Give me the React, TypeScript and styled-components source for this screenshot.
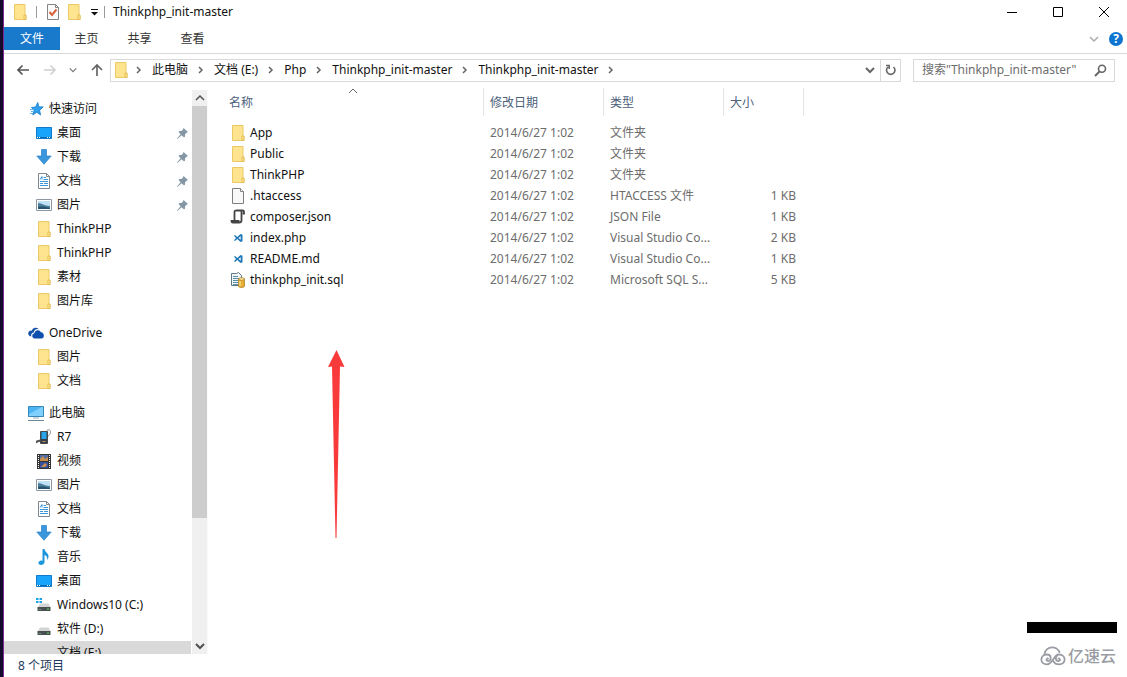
import React from "react";
import styled, { createGlobalStyle } from "styled-components";

const GlobalStyle = createGlobalStyle`
  * { box-sizing: border-box; }
  body {
    margin: 0;
    background: #fff;
    color: #111;
    font: 12px/20px "Noto Sans", "Noto Sans CJK SC", sans-serif;
  }
  button, input { font: inherit; color: inherit; border: 0; background: none; padding: 0; margin: 0; }
  a { color: inherit; text-decoration: none; }
  svg { display: block; flex: none; }
  ul, ol { list-style: none; margin: 0; padding: 0; }
`;

/* ---------- Icons ---------- */

const Folder = () => (
  <svg width="16" height="16" viewBox="0 0 16 16">
    <path d="M2.500 .5h10.500v10.300l1 .7v4H2.500z" fill="#ffe48f" stroke="#ecc964" />
    <path d="M12 11h2v4.500h-2z" fill="#ffeaa6" stroke="#e6bd4c" />
  </svg>
);
const CheckPage = () => (
  <svg width="16" height="16" viewBox="0 0 16 16">
    <path d="M2.500 .5h8l3 3v12h-11z" fill="#fafafa" stroke="#858585" />
    <path d="M10.500 .5v3h3" fill="none" stroke="#858585" />
    <path d="M4.500 8l2.500 3 4.500-5.500" fill="none" stroke="#d9603b" strokeWidth="2" />
  </svg>
);
const Star = () => (
  <svg width="16" height="16" viewBox="0 0 16 16">
    <path d="M9.800 1.500l1 4.300 4.400.1-3.600 3.300 1 4.700-3.800-2.600-4 2.600 1.200-4.700L3.500 6.500l4-.5z" fill="#2ea0ee" stroke="#1478c8" strokeWidth=".8" />
    <path d="M2 8.500h4M3 10.500h3M2 12.500h3" stroke="#64b7ef" />
  </svg>
);
const Desktop = () => (
  <svg width="16" height="16" viewBox="0 0 16 16">
    <path d="M.5 2.500h15v11H.5z" fill="#18a4fb" stroke="#1079cb" />
    <path d="M1 12.500h14" stroke="#0f68b5" />
    <path d="M1 12.500h1M3 12.500h1M11 12.500h1M13 12.500h1" stroke="#fff" />
  </svg>
);
const Download = () => (
  <svg width="16" height="16" viewBox="0 0 16 16">
    <path d="M5.500 .5h5V7h4.700L8 15.300.8 7h4.700z" fill="#3a96dd" stroke="#2b83c9" strokeWidth=".7" />
  </svg>
);
const Doc = () => (
  <svg width="16" height="16" viewBox="0 0 16 16">
    <path d="M2.500 .5h8l3 3v12h-11z" fill="#fff" stroke="#7f8890" />
    <path d="M10.500 .5v3h3" fill="none" stroke="#7f8890" />
    <path d="M4 6.500l2-3v3m1.500-2H10M7.500 6.500H12M4 8.500h8M4 10.500h3m1 0h4M4 12.500h8" fill="none" stroke="#3997da" />
  </svg>
);
const Picture = () => (
  <svg width="16" height="16" viewBox="0 0 16 16">
    <path d="M.5 2.500h15v11H.5z" fill="#fff" stroke="#8b98a3" />
    <path d="M2 4h12v8H2z" fill="#bfe1f6" />
    <path d="M2 6c4 0 6 3 12 3v3H2z" fill="#4c7d9b" />
    <path d="M2 10c4-1 8 0 12 1v1H2z" fill="#275370" />
  </svg>
);
const OneDrive = () => (
  <svg width="16" height="16" viewBox="0 0 16 16">
    <path d="M3.300 11.500A3 3 0 0 1 1 6.500a2.800 2.800 0 0 1 2.700-.8A4.200 4.200 0 0 1 11 4.200 4 4 0 0 0 5.700 7.500c-2 .2-3 2-2.400 4z" fill="#1452a8" />
    <path d="M6.500 13.500a2.700 2.700 0 0 1-.2-5.300 3.600 3.600 0 0 1 6.700-1 3.300 3.300 0 0 1 2.800 3.200c.2 1.700-.8 3.100-2.300 3.100z" fill="#0f4fae" />
  </svg>
);
const Monitor = () => (
  <svg width="16" height="16" viewBox="0 0 16 16">
    <path d="M.5 1.500h15v10H.5z" fill="#4db5f3" stroke="#3a85b7" />
    <path d="M1 9l13-7h1v9H1z" fill="#7fd0fb" />
    <path d="M5 13h6" stroke="#9badb9" />
    <path d="M0 15.500h16" stroke="#718795" />
  </svg>
);
const Player = () => (
  <svg width="16" height="16" viewBox="0 0 16 16">
    <path d="M10 3c1-3 5-3 4.500.5-.2 2-1.500 2-2.500 4" fill="none" stroke="#8a8a8a" />
    <path d="M0 14c1-3 3-1 5-3" fill="none" stroke="#555" strokeWidth="2" />
    <path d="M4.500 2.500h7v12h-7z" fill="#333f49" stroke="#4a4a4a" />
    <path d="M5.500 3h5v7h-5z" fill="#2ba5ee" />
    <path d="M6.500 12.500h3" stroke="#c59150" />
  </svg>
);
const Film = () => (
  <svg width="16" height="16" viewBox="0 0 16 16">
    <path d="M1 1h14v15H1z" fill="#343434" />
    <path d="M2.500 2v13M13.500 2v13" stroke="#fff" strokeDasharray="1 1" />
    <path d="M4 2h8v6H4z" fill="#526fa4" />
    <path d="M4 9h8v6H4z" fill="#394f9b" />
    <path d="M4 6l3-3 2 3 3-2v4H4zM5 14l4-4 2 2-2 2z" fill="#c99050" />
  </svg>
);
const Music = () => (
  <svg width="16" height="16" viewBox="0 0 16 16">
    <path d="M6.500 0h2c0 3 4.500 4 4 8-.2 1.500-1 2.300-1.500 3 .5-3-.5-4.500-2.500-5v7c0 3-5 4-6 1.500-.6-2 2-3.700 4-2.700z" fill="#1d96dc" />
  </svg>
);
const Drive = ({ windows }: { windows?: boolean }) => (
  <svg width="16" height="16" viewBox="0 0 16 16">
    {windows && <path d="M0 1h2.500v2H0zM3.500 1H6v2H3.500zM0 4h2.500v2H0zM3.500 4H6v2H3.500z" fill="#18a5e8" />}
    <path d="M4 6.500h8.500l2 3.500H2z" fill="#d3d5d5" />
    <path d="M1.500 10h13v4h-13z" fill="#46504f" />
    <path d="M2.500 12.500h3" stroke="#71817f" />
    <path d="M11 12h2" stroke="#63d45e" />
  </svg>
);
const Pin = () => (
  <svg width="11" height="11" viewBox="0 0 11 11">
    <path d="M6.500 0L11 4 9.500 4.700 8 6.500v2L7 9.500 4.700 7.300.3 11 0 10.500 3.600 6.200 1.500 4l1-1h2L6 1.500z" fill="#8597a5" />
  </svg>
);
const BlankPage = () => (
  <svg width="16" height="16" viewBox="0 0 16 16">
    <path d="M2.500 .5h8l3 3v12h-11z" fill="#f8f8f8" stroke="#7f7f7f" />
    <path d="M10.500 .5v3h3" fill="#fff" stroke="#7f7f7f" />
  </svg>
);
const Script = () => (
  <svg width="16" height="16" viewBox="0 0 16 16">
    <path d="M4.500 11V3c0-1.500.5-1.500 2-1.500h6c1.500 0 1.500 0 1.500 3h-1.500" fill="none" stroke="#444" strokeWidth="1.800" />
    <path d="M11.500 2v9.500c0 2-1 2-2.500 2H3c-1.200 0-1.500-.5-1.500-1.500H8.500v1.500" fill="none" stroke="#444" strokeWidth="1.800" />
  </svg>
);
const Code = () => (
  <svg width="16" height="16" viewBox="0 0 16 16">
    <path d="M10.500 4L12.500 4.800v6.400l-2 .8L7.300 9 5 11l-1-.8L6 8 4 5.800 5 5l2.300 2zM10.700 6.300L8.500 8l2.200 1.700z" fill="#2077b9" fillRule="evenodd" />
  </svg>
);
const Sql = () => (
  <svg width="16" height="16" viewBox="0 0 16 16">
    <path d="M1.500 1.500h5l2-1 3 3v10h-10z" fill="#eef6fa" stroke="#607785" />
    <path d="M3 4.500h5M3 6.500h6M3 8.500h5M3 10.500h5M3 12.500h5" stroke="#5c8ea8" />
    <path d="M8.500 7v7c0 2 6 2 6 0V7z" fill="#e8ae32" stroke="#a8791c" strokeWidth=".7" />
    <ellipse cx="11.500" cy="7" rx="3" ry="1.300" fill="#ffe39c" stroke="#a8791c" strokeWidth=".7" />
    <path d="M10 9v5" stroke="#fff0b8" />
  </svg>
);
const Chevron = ({ dir, color = "#666", size = 10, weight = 1.5 }: { dir: "up" | "down" | "right"; color?: string; size?: number; weight?: number }) => (
  <svg width={size} height={size} viewBox="0 0 10 10" fill="none" stroke={color} strokeWidth={weight}>
    <path d={dir === "up" ? "M1 7l4-4 4 4" : dir === "down" ? "M1 3l4 4 4-4" : "M3 2l3 3-3 3"} />
  </svg>
);
const Arrow = ({ dir, color }: { dir: "left" | "right" | "up"; color: string }) => (
  <svg width="14" height="14" viewBox="0 0 14 14" fill="none" stroke={color} strokeWidth="1.700">
    <path d={dir === "left" ? "M13 7H2M6.500 2.500L2 7l4.500 4.500" : dir === "right" ? "M1 7h11M7.500 2.500L12 7l-4.500 4.500" : "M7 13V2M2 7l5-5 5 5"} />
  </svg>
);
const Refresh = () => (
  <svg width="12" height="12" viewBox="0 0 12 12" fill="none" stroke="#696969" strokeWidth="1.600">
    <path d="M3 3a4.200 4.200 0 1 0 5.500 0M1 1.500h3.200V5" />
  </svg>
);
const Magnifier = () => (
  <svg width="13" height="13" viewBox="0 0 13 13" fill="none" stroke="#666" strokeWidth="1.600">
    <circle cx="8" cy="4.800" r="3.500" />
    <path d="M5.500 7.500L1 12" strokeWidth="2" />
  </svg>
);

/* ---------- Window frame ---------- */

const Window = styled.div`
  position: relative;
  display: flex;
  flex-direction: column;
  height: 100vh;
  padding-left: 1px;
  border-left: 3px solid #150a2c;
  box-shadow: inset 1px 0 #7d2a93;
  background: #fff;
  overflow: hidden;
`;
const TitleBar = styled.header`
  display: flex;
  align-items: center;
  height: 27px;
  padding: 0 0 4px 8px;
`;
const QuickAccess = styled.div`
  display: flex;
  align-items: center;
  gap: 5px;
`;
const IconButton = styled.button<{ $w?: number }>`
  display: flex;
  align-items: center;
  justify-content: center;
  width: ${({ $w = 16 }) => $w}px;
  height: 20px;
`;
const Separator = styled.span`
  width: 1px;
  height: 12px;
  margin: 0 3px;
  background: #999;
`;
const Title = styled.h1`
  margin: 0 0 0 5px;
  font-size: 12px;
  font-weight: 400;
  flex: 1;
`;
const CaptionButton = styled.button`
  display: flex;
  align-items: center;
  justify-content: center;
  width: 46px;
  height: 22px;
`;
const Ribbon = styled.nav`
  display: flex;
  align-items: center;
  height: 27px;
  padding: 0 4px 3px 0;
  border-bottom: 1px solid #d9dadb;
`;
const Tab = styled.button<{ $active?: boolean }>`
  width: ${({ $active }) => ($active ? 56 : 53)}px;
  height: 23px;
  color: ${({ $active }) => ($active ? "#fff" : "#333")};
  background: ${({ $active }) => ($active ? "#1979ca" : "transparent")};
`;
const Spacer = styled.span`
  flex: 1;
`;
const Help = styled.button`
  width: 14px;
  height: 14px;
  margin-left: 11px;
  border-radius: 50%;
  background: #0d74d0;
  color: #fff;
  font-weight: 700;
  line-height: 14px;
`;

/* ---------- Address row ---------- */

const AddressRow = styled.div`
  display: flex;
  align-items: center;
  height: 34px;
  padding: 0 12px 2px 12px;
`;
const NavButtons = styled.div`
  display: flex;
  align-items: center;
  justify-content: space-between;
  width: 88px;
  margin-right: 6px;
`;
const AddressBox = styled.div`
  display: flex;
  align-items: center;
  flex: 1;
  height: 23px;
  padding-left: 2px;
  border: 1px solid #d9d9d9;
`;
const Crumbs = styled.ol`
  display: flex;
  align-items: center;
  flex: 1;
  margin-left: 5px;
`;
const Crumb = styled.li`
  display: flex;
  align-items: center;
  gap: 8px;
  margin-right: 8px;
`;
const RefreshButton = styled(IconButton)`
  height: 21px;
  border-left: 1px solid #d9d9d9;
`;
const SearchBox = styled.form`
  display: flex;
  align-items: center;
  width: 202px;
  height: 23px;
  margin-left: 12px;
  padding: 0 6px 0 8px;
  border: 1px solid #d9d9d9;
`;
const SearchInput = styled.input`
  flex: 1;
  min-width: 0;
  outline: 0;
  &::placeholder { color: #6d6d6d; opacity: 1; }
`;

/* ---------- Navigation pane ---------- */

const Body = styled.div`
  display: flex;
  flex: 1;
  min-height: 0;
`;
const Side = styled.aside`
  display: flex;
  width: 204px;
  padding-top: 2px;
`;
const Tree = styled.nav`
  flex: 1;
  min-width: 0;
  padding-top: 7px;
  overflow: hidden;
`;
const Group = styled.ul`
  margin-bottom: 8px;
`;
const TreeLink = styled.a<{ $root?: boolean; $selected?: boolean }>`
  display: flex;
  align-items: center;
  gap: 5px;
  height: 24px;
  margin-right: 1px;
  padding: 0 3px 0 ${({ $root }) => ($root ? 24 : 32)}px;
  background: ${({ $selected }) => ($selected ? "#d9d9d9" : "transparent")};
`;
const Label = styled.span`
  flex: 1;
  white-space: nowrap;
`;
const IconSlot = styled.span`
  width: 16px;
  height: 16px;
`;
const ScrollBar = styled.div`
  display: flex;
  flex-direction: column;
  width: 16px;
  background: #f0f0f0;
  border-right: 1px solid #fafafa;
`;
const ScrollButton = styled.button`
  display: flex;
  align-items: center;
  justify-content: center;
  height: 16px;
`;
const Track = styled.div`
  flex: 1;
`;
const Thumb = styled.div`
  height: 77.5%;
  background: #cdcdcd;
`;

/* ---------- File list ---------- */

const Files = styled.main`
  position: relative;
  flex: 1;
  min-width: 0;
`;
const Table = styled.table`
  width: 596px;
  table-layout: fixed;
  border-collapse: separate;
  border-spacing: 0;
  tbody::before { content: ""; display: block; height: 6px; }
`;
const Head = styled.th<{ $w: number; $first?: boolean }>`
  position: relative;
  width: ${({ $w }) => $w}px;
  height: 28px;
  padding: 2px 0 0 ${({ $first }) => ($first ? 21 : 6)}px;
  border-right: 1px solid #e5e5e5;
  color: #4c607a;
  font-weight: 400;
  text-align: left;
`;
const SortMark = styled.span`
  position: absolute;
  top: -2px;
  left: 140px;
`;
const Cell = styled.td<{ $right?: boolean }>`
  height: 21px;
  padding: 0 ${({ $right }) => ($right ? 8 : 0)}px 0 6px;
  color: #6d6d6d;
  text-align: ${({ $right }) => ($right ? "right" : "left")};
  white-space: nowrap;
`;
const NameCell = styled(Cell)`
  padding-left: 22px;
  color: #111;
`;
const FileLink = styled.a`
  display: flex;
  align-items: center;
  gap: 4px;
`;
const Pointer = styled.svg`
  position: absolute;
  top: 262px;
  left: 120px;
`;
const StatusBar = styled.footer`
  height: 23px;
  padding: 2px 14px 0;
  color: #1e395b;
`;
const Watermark = styled.div`
  position: absolute;
  right: 10px;
  bottom: 9px;
`;
const Redaction = styled.div`
  width: 90px;
  height: 11px;
  margin-bottom: 11px;
  background: #000;
`;
const Brand = styled.div`
  display: flex;
  align-items: center;
  justify-content: flex-end;
  gap: 2px;
  height: 24px;
  margin-right: 1px;
  color: #9a9ca3;
  font-size: 16px;
  font-weight: 500;
`;

type Item = { name: string; icon: React.ReactNode; pinned?: boolean; selected?: boolean };

const groups: { root: Item; items: Item[] }[] = [
  {
    root: { name: "快速访问", icon: <Star /> },
    items: [
      { name: "桌面", icon: <Desktop />, pinned: true },
      { name: "下载", icon: <Download />, pinned: true },
      { name: "文档", icon: <Doc />, pinned: true },
      { name: "图片", icon: <Picture />, pinned: true },
      { name: "ThinkPHP", icon: <Folder /> },
      { name: "ThinkPHP", icon: <Folder /> },
      { name: "素材", icon: <Folder /> },
      { name: "图片库", icon: <Folder /> },
    ],
  },
  {
    root: { name: "OneDrive", icon: <OneDrive /> },
    items: [
      { name: "图片", icon: <Folder /> },
      { name: "文档", icon: <Folder /> },
    ],
  },
  {
    root: { name: "此电脑", icon: <Monitor /> },
    items: [
      { name: "R7", icon: <Player /> },
      { name: "视频", icon: <Film /> },
      { name: "图片", icon: <Picture /> },
      { name: "文档", icon: <Doc /> },
      { name: "下载", icon: <Download /> },
      { name: "音乐", icon: <Music /> },
      { name: "桌面", icon: <Desktop /> },
      { name: "Windows10 (C:)", icon: <Drive windows /> },
      { name: "软件 (D:)", icon: <Drive /> },
      { name: "文档 (E:)", icon: <IconSlot />, selected: true },
    ],
  },
];

const files: [React.ReactNode, string, string, string][] = [
  [<Folder />, "App", "文件夹", ""],
  [<Folder />, "Public", "文件夹", ""],
  [<Folder />, "ThinkPHP", "文件夹", ""],
  [<BlankPage />, ".htaccess", "HTACCESS 文件", "1 KB"],
  [<Script />, "composer.json", "JSON File", "1 KB"],
  [<Code />, "index.php", "Visual Studio Co...", "2 KB"],
  [<Code />, "README.md", "Visual Studio Co...", "1 KB"],
  [<Sql />, "thinkphp_init.sql", "Microsoft SQL S...", "5 KB"],
];

const crumbs = ["此电脑", "文档 (E:)", "Php", "Thinkphp_init-master", "Thinkphp_init-master"];

export default function App() {
  return (
    <Window>
      <GlobalStyle />
      <TitleBar>
        <QuickAccess>
          <Folder />
          <Separator />
          <IconButton aria-label="属性"><CheckPage /></IconButton>
          <IconButton aria-label="新建文件夹"><Folder /></IconButton>
          <IconButton $w={14} aria-label="自定义快速访问工具栏">
            <svg width="9" height="8" viewBox="0 0 9 8"><path d="M1 1.500h7" stroke="#111" /><path d="M1 4h7L4.500 7.500z" fill="#111" /></svg>
          </IconButton>
        </QuickAccess>
        <Separator />
        <Title>Thinkphp_init-master</Title>
        <CaptionButton aria-label="最小化"><svg width="10" height="10"><path d="M0 5.500h10" stroke="#000" /></svg></CaptionButton>
        <CaptionButton aria-label="最大化"><svg width="10" height="10"><path d="M.5 .5h9v9h-9z" fill="none" stroke="#000" /></svg></CaptionButton>
        <CaptionButton aria-label="关闭"><svg width="10" height="10"><path d="M0 0l10 10M10 0L0 10" stroke="#000" /></svg></CaptionButton>
      </TitleBar>
      <Ribbon>
        <Tab $active>文件</Tab>
        <Tab>主页</Tab>
        <Tab>共享</Tab>
        <Tab>查看</Tab>
        <Spacer />
        <IconButton $w={9} aria-label="展开功能区"><Chevron dir="down" color="#aaa" /></IconButton>
        <Help aria-label="帮助">?</Help>
      </Ribbon>
      <AddressRow>
        <NavButtons>
          <IconButton $w={14} aria-label="返回"><Arrow dir="left" color="#555" /></IconButton>
          <IconButton $w={14} aria-label="前进"><Arrow dir="right" color="#d0d0d0" /></IconButton>
          <IconButton $w={8} aria-label="最近浏览的位置"><Chevron dir="down" size={8} color="#777" /></IconButton>
          <IconButton $w={14} aria-label="上移"><Arrow dir="up" color="#666" /></IconButton>
        </NavButtons>
        <AddressBox>
          <Folder />
          <Crumbs>
            <Crumb><Chevron dir="right" /></Crumb>
            {crumbs.map((name, i) => (
              <Crumb key={i}><a href="#">{name}</a><Chevron dir="right" /></Crumb>
            ))}
          </Crumbs>
          <IconButton $w={20} aria-label="以前的位置"><Chevron dir="down" weight={2} /></IconButton>
          <RefreshButton $w={20} aria-label="刷新"><Refresh /></RefreshButton>
        </AddressBox>
        <SearchBox>
          <SearchInput aria-label="搜索" placeholder={'搜索"Thinkphp_init-master"'} />
          <IconButton type="button" aria-label="搜索"><Magnifier /></IconButton>
        </SearchBox>
      </AddressRow>
      <Body>
        <Side>
          <Tree>
            {groups.map(({ root, items }) => (
              <Group key={root.name}>
                <li><TreeLink href="#" $root>{root.icon}<Label>{root.name}</Label></TreeLink></li>
                {items.map((item, i) => (
                  <li key={i}>
                    <TreeLink href="#" $selected={item.selected}>
                      {item.icon}<Label>{item.name}</Label>{item.pinned && <Pin />}
                    </TreeLink>
                  </li>
                ))}
              </Group>
            ))}
          </Tree>
          <ScrollBar>
            <ScrollButton aria-label="向上滚动"><Chevron dir="up" color="#505050" /></ScrollButton>
            <Track><Thumb /></Track>
            <ScrollButton aria-label="向下滚动"><Chevron dir="down" color="#505050" weight={2} /></ScrollButton>
          </ScrollBar>
        </Side>
        <Files>
          <Table>
            <thead>
              <tr>
                <Head $w={276} $first>名称<SortMark><Chevron dir="up" weight={1} /></SortMark></Head>
                <Head $w={120}>修改日期</Head>
                <Head $w={120}>类型</Head>
                <Head $w={80}>大小</Head>
              </tr>
            </thead>
            <tbody>
              {files.map(([icon, name, type, size]) => (
                <tr key={name}>
                  <NameCell><FileLink href="#">{icon}{name}</FileLink></NameCell>
                  <Cell>2014/6/27 1:02</Cell>
                  <Cell>{type}</Cell>
                  <Cell $right>{size}</Cell>
                </tr>
              ))}
            </tbody>
          </Table>
          <Pointer width="17" height="188" viewBox="0 0 17 188">
            <path d="M8.500 0L16.500 17 12 16.500 8.500 188H7.500L4 16.500 0 17z" fill="#f93a3a" />
          </Pointer>
        </Files>
      </Body>
      <StatusBar>8 个项目</StatusBar>
      <Watermark>
        <Redaction />
        <Brand>
          <svg width="26" height="20" viewBox="0 0 26 20" fill="none" stroke="#9a9ca3" strokeWidth="1.800" strokeLinecap="round">
            <path d="M4.500 8C5 4 8.500 1.300 12 1.300c3.500 0 6 1.700 7.500 4.700" />
            <path d="M8 12.500c-1.500-.5-2.500 2.500 0 2.500 4 0 3.500-6.500-1-6.500-7.500 0-7.500 9.800 0 9.800 6 0 6.500-9.800 12-9.800 7.500 0 7.500 9.800 0 9.800-2.500 0-4.500-1-5.500-3" />
            <path d="M18.500 12.500c1.500-.5 2.500 2.500 0 2.500-3.500 0-3-4-1.500-5.500" />
          </svg>
          亿速云
        </Brand>
      </Watermark>
    </Window>
  );
}
